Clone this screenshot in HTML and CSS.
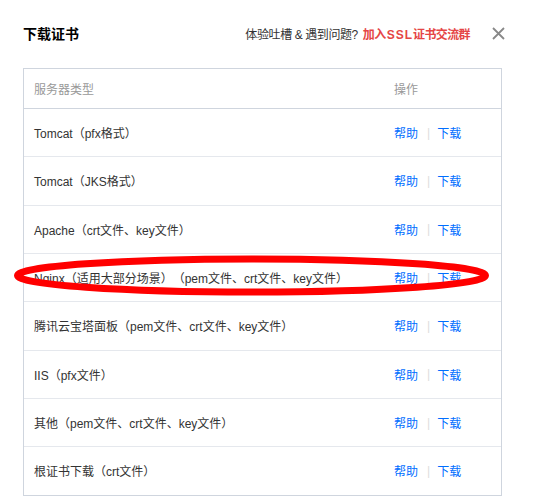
FILE: index.html
```html
<!DOCTYPE html>
<html lang="zh-CN">
<head>
<meta charset="utf-8">
<title>下载证书</title>
<link rel="stylesheet" href="styles.css">
</head>
<body>
<div class="dialog">
  <div class="head">
    <div class="title">下载证书</div>
    <div class="feedback">体验吐槽 &amp; 遇到问题? <a class="group-link">加入<span class="ssl">SSL</span>证书交流群</a></div>
    <div class="close" aria-label="关闭">
      <svg width="13" height="13" viewBox="0 0 13 13"><path d="M1 1L12 12M12 1L1 12" stroke="#888" stroke-width="1.8" fill="none"/></svg>
    </div>
  </div>
  <div class="table">
    <div class="row header">
      <div class="cell name">服务器类型</div>
      <div class="cell ops">操作</div>
    </div>
    <div class="row"><div class="cell name">Tomcat（pfx格式）</div><div class="cell ops"><a>帮助</a><span class="sep">|</span><a>下载</a></div></div>
    <div class="row"><div class="cell name">Tomcat（JKS格式）</div><div class="cell ops"><a>帮助</a><span class="sep">|</span><a>下载</a></div></div>
    <div class="row"><div class="cell name">Apache（crt文件、key文件）</div><div class="cell ops"><a>帮助</a><span class="sep">|</span><a>下载</a></div></div>
    <div class="row"><div class="cell name">Nginx（适用大部分场景）（pem文件、crt文件、key文件）</div><div class="cell ops"><a>帮助</a><span class="sep">|</span><a>下载</a></div></div>
    <div class="row"><div class="cell name">腾讯云宝塔面板（pem文件、crt文件、key文件）</div><div class="cell ops"><a>帮助</a><span class="sep">|</span><a>下载</a></div></div>
    <div class="row"><div class="cell name">IIS（pfx文件）</div><div class="cell ops"><a>帮助</a><span class="sep">|</span><a>下载</a></div></div>
    <div class="row"><div class="cell name">其他（pem文件、crt文件、key文件）</div><div class="cell ops"><a>帮助</a><span class="sep">|</span><a>下载</a></div></div>
    <div class="row last"><div class="cell name">根证书下载（crt文件）</div><div class="cell ops"><a>帮助</a><span class="sep">|</span><a>下载</a></div></div>
  </div>
</div>
<svg class="annotation" width="544" height="501" viewBox="0 0 544 501">
  <ellipse cx="251.5" cy="275.5" rx="234" ry="16.5" fill="none" stroke="#f00" stroke-width="7"/>
</svg>
</body>
</html>
```
FILE: styles.css
```css
html, body {
  margin: 0;
  padding: 0;
  background: #fff;
}
body {
  font-family: "Liberation Sans", "Noto Sans CJK SC", sans-serif;
  font-size: 12px;
  color: #333;
  position: relative;
  width: 544px;
  height: 501px;
  overflow: hidden;
  text-spacing-trim: space-all;
}
.dialog {
  padding: 20px 0 0 23px;
}
.head {
  display: flex;
  align-items: center;
  height: 26px;
  padding-right: 38px;
}
.title {
  font-size: 14px;
  font-weight: bold;
  color: #000;
}
.feedback {
  margin-left: auto;
  color: #333;
  font-size: 12px;
  letter-spacing: -0.4px;
}
.group-link {
  color: #e54545;
  font-weight: bold;
  margin-left: 2px;
  letter-spacing: -0.6px;
}
.ssl {
  letter-spacing: 1px;
  margin-left: 1px;
}
.close {
  width: 15px;
  height: 15px;
  margin-left: 21px;
  display: flex;
  align-items: center;
  justify-content: center;
}
.table {
  margin-top: 22px;
  width: 477px;
  border: 1px solid #cfd5de;
}
.row {
  display: flex;
  align-items: center;
  height: 47.33px;
  border-bottom: 1px solid #e5e8ed;
}
.row.last {
  border-bottom: none;
}
.row.header {
  height: 39px;
  border-bottom: 1px solid #cfd5de;
  color: #999;
}
.cell.name {
  flex: 1;
  padding-left: 10px;
}
.cell.ops {
  width: 107px;
  display: flex;
  align-items: center;
}
.cell.ops a {
  color: #006eff;
}
.sep {
  color: #ddd;
  margin: 0 7px 0 9px;
}
.annotation {
  position: absolute;
  left: 0;
  top: 0;
  pointer-events: none;
}
```
